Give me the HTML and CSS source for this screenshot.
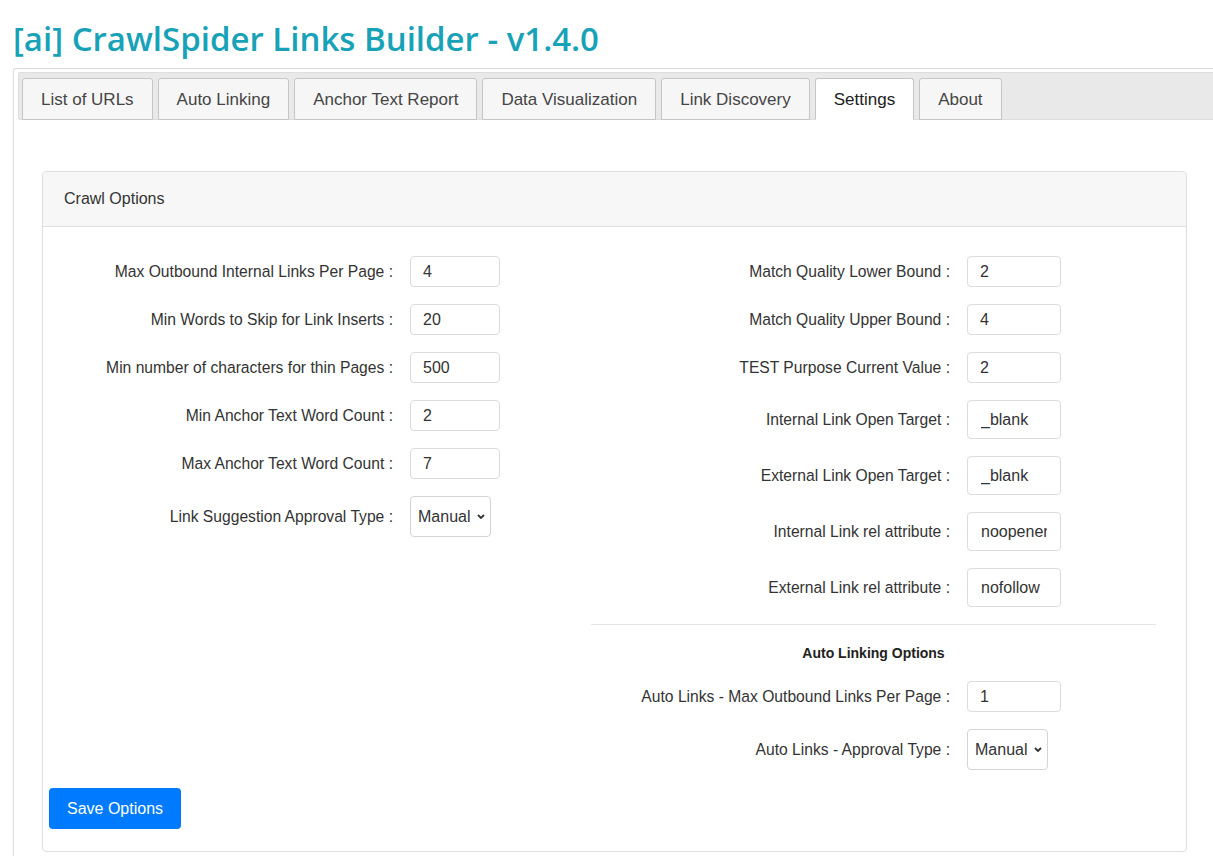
FILE: index.html
```html
<!DOCTYPE html>
<html lang="en">
<head>
    <meta charset="UTF-8">
    <meta name="viewport" content="width=device-width, initial-scale=1.0">
    <title>CrawlSpider Links Builder - Settings</title>
    <link rel="stylesheet" href="styles.css">
</head>
<body>
    <h1 class="app-title">[ai] CrawlSpider Links Builder - v1.4.0</h1>

    <div class="tabs">
        <ul class="tab-nav">
            <li class="tab">List of URLs</li>
            <li class="tab">Auto Linking</li>
            <li class="tab">Anchor Text Report</li>
            <li class="tab">Data Visualization</li>
            <li class="tab">Link Discovery</li>
            <li class="tab active">Settings</li>
            <li class="tab">About</li>
        </ul>

        <div class="tab-panel">
            <div class="card">
                <div class="card-header">Crawl Options</div>
                <div class="card-body">
                    <div class="columns">
                        <!-- Crawl limits -->
                        <div class="col col-left">
                            <div class="field">
                                <label>Max Outbound Internal Links Per Page :</label>
                                <input type="text" class="input" value="4">
                            </div>
                            <div class="field">
                                <label>Min Words to Skip for Link Inserts :</label>
                                <input type="text" class="input" value="20">
                            </div>
                            <div class="field">
                                <label>Min number of characters for thin Pages :</label>
                                <input type="text" class="input" value="500">
                            </div>
                            <div class="field">
                                <label>Min Anchor Text Word Count :</label>
                                <input type="text" class="input" value="2">
                            </div>
                            <div class="field">
                                <label>Max Anchor Text Word Count :</label>
                                <input type="text" class="input" value="7">
                            </div>
                            <div class="field">
                                <label>Link Suggestion Approval Type :</label>
                                <div class="select-wrap">
                                    <select class="select">
                                        <option>Manual</option>
                                        <option>Auto</option>
                                    </select>
                                    <svg class="chevron" viewBox="0 0 8 5" width="8" height="5"><path d="M1 1l3 3 3-3" fill="none" stroke="#333" stroke-width="1.8"/></svg>
                                </div>
                            </div>
                        </div>

                        <!-- Match quality and link attributes -->
                        <div class="col col-right">
                            <div class="field">
                                <label>Match Quality Lower Bound :</label>
                                <input type="text" class="input" value="2">
                            </div>
                            <div class="field">
                                <label>Match Quality Upper Bound :</label>
                                <input type="text" class="input" value="4">
                            </div>
                            <div class="field">
                                <label>TEST Purpose Current Value :</label>
                                <input type="text" class="input" value="2">
                            </div>
                            <div class="field">
                                <label>Internal Link Open Target :</label>
                                <input type="text" class="input tall" value="_blank">
                            </div>
                            <div class="field">
                                <label>External Link Open Target :</label>
                                <input type="text" class="input tall" value="_blank">
                            </div>
                            <div class="field">
                                <label>Internal Link rel attribute :</label>
                                <input type="text" class="input tall" value="noopener">
                            </div>
                            <div class="field">
                                <label>External Link rel attribute :</label>
                                <input type="text" class="input tall" value="nofollow">
                            </div>

                            <hr class="divider">
                            <h6 class="section-title">Auto Linking Options</h6>

                            <div class="field">
                                <label>Auto Links - Max Outbound Links Per Page :</label>
                                <input type="text" class="input" value="1">
                            </div>
                            <div class="field">
                                <label>Auto Links - Approval Type :</label>
                                <div class="select-wrap">
                                    <select class="select">
                                        <option>Manual</option>
                                        <option>Auto</option>
                                    </select>
                                    <svg class="chevron" viewBox="0 0 8 5" width="8" height="5"><path d="M1 1l3 3 3-3" fill="none" stroke="#333" stroke-width="1.8"/></svg>
                                </div>
                            </div>
                        </div>
                    </div>

                    <button class="btn-save">Save Options</button>
                </div>
            </div>
        </div>
    </div>
</body>
</html>
```

FILE: styles.css
```css
body {
    font-family: "Liberation Sans", Arial, sans-serif;
    font-size: 16px;
    color: #333;
    margin: 0;
    padding: 0 0 0 13px;
    background-color: #fff;
}

.app-title {
    font-family: "Open Sans", sans-serif;
    font-weight: 600;
    font-size: 33px;
    line-height: 40px;
    color: #17a2b8;
    margin: 19px 0 9px;
}

/* Tabs widget */
.tabs {
    border: 1px solid #ddd;
    border-right: none;
    border-radius: 3px 0 0 0;
    padding: 3px 0 0 4px;
    background-color: #fff;
}

.tab-nav {
    display: flex;
    list-style: none;
    margin: 0;
    padding: 5px 3px 0;
    background-color: #e9e9e9;
    border: 1px solid #ddd;
    border-right: none;
    border-radius: 3px 0 0 3px;
}

.tab {
    height: 40px;
    line-height: 41px;
    padding: 0 18px;
    margin: 0 5px -1px 0;
    font-size: 17px;
    color: #454545;
    background-color: #f6f6f6;
    border: 1px solid #c5c5c5;
    border-radius: 3px 3px 0 0;
    cursor: pointer;
}

.tab.active {
    background-color: #fff;
    color: #212121;
    border-bottom-color: #fff;
}

.tab-panel {
    padding: 51px 26px 20px 24px;
}

/* Card */
.card {
    border: 1px solid #dfdfdf;
    border-radius: 4px;
}

.card-header {
    padding: 15px 21px;
    line-height: 24px;
    background-color: #f7f7f7;
    border-bottom: 1px solid #dfdfdf;
    border-radius: 4px 4px 0 0;
}

.card-body {
    padding: 29px 30px 22px 6px;
}

.columns {
    display: grid;
    grid-template-columns: 542px 565px;
}

.field {
    display: grid;
    align-items: center;
    column-gap: 17px;
    margin-bottom: 17px;
}

.col-left .field {
    grid-template-columns: 344px 90px;
}

.col-right .field {
    grid-template-columns: 359px 94px;
}

.field label {
    font-size: 15.65px;
    text-align: right;
    white-space: nowrap;
}

.input {
    box-sizing: border-box;
    width: 100%;
    height: 31px;
    padding: 0 12px;
    font-family: inherit;
    font-size: 16px;
    color: #333;
    border: 1px solid #dcdcdc;
    border-radius: 4px;
    outline: none;
}

.input.tall {
    height: 39px;
    padding: 0 13px;
}

.select-wrap {
    position: relative;
    width: 81px;
    height: 41px;
}

.select {
    appearance: none;
    -webkit-appearance: none;
    box-sizing: border-box;
    width: 100%;
    height: 100%;
    padding: 0 0 0 7px;
    font-family: inherit;
    font-size: 16px;
    color: #333;
    background-color: #fff;
    border: 1px solid #d4d4d4;
    border-radius: 4px;
    outline: none;
}

.chevron {
    position: absolute;
    right: 6px;
    top: 18px;
    pointer-events: none;
}

.divider {
    border: none;
    border-top: 1px solid #e6e6e6;
    margin: 0 0 18px;
}

.section-title {
    font-size: 14px;
    font-weight: bold;
    line-height: 20px;
    text-align: center;
    color: #222;
    margin: 0 0 18px;
}

.btn-save {
    margin-top: 1px;
    height: 41px;
    padding: 0 18px;
    font-family: inherit;
    font-size: 16px;
    color: #fff;
    background-color: #007bff;
    border: none;
    border-radius: 4px;
    cursor: pointer;
}

.btn-save:hover {
    background-color: #0069d9;
}
```
